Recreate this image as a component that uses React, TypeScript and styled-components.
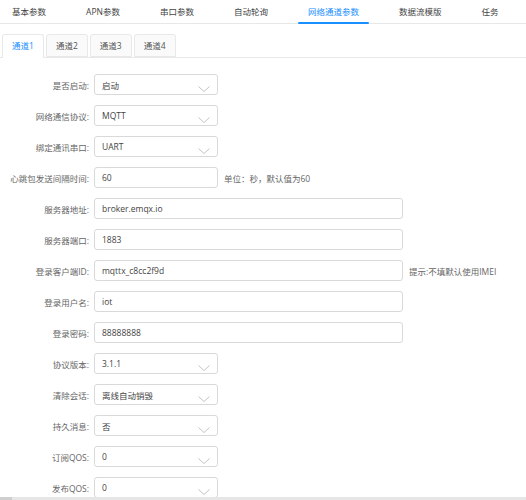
import React from 'react';
import styled, { createGlobalStyle } from 'styled-components';

const GlobalStyle = createGlobalStyle`
  html, body {
    margin: 0;
    padding: 0;
    background: #fff;
    overflow: hidden;
  }
  body {
    font-family: "Open Sans", "Noto Sans CJK SC", sans-serif;
    font-size: 8.5px;
    color: #444;
  }
`

const topTabs = ['基本参数', 'APN参数', '串口参数', '自动轮询', '网络通道参数', '数据流模版', '任务']
const subTabs = ['通道1', '通道2', '通道3', '通道4']

type Row = {
  label: string
  value: string
  kind: 'select' | 'short' | 'wide'
  note?: string
}

const rows: Row[] = [
  { label: '是否启动:', value: '启动', kind: 'select' },
  { label: '网络通信协议:', value: 'MQTT', kind: 'select' },
  { label: '绑定通讯串口:', value: 'UART', kind: 'select' },
  { label: '心跳包发送间隔时间:', value: '60', kind: 'short', note: '单位：秒，默认值为60' },
  { label: '服务器地址:', value: 'broker.emqx.io', kind: 'wide' },
  { label: '服务器端口:', value: '1883', kind: 'wide' },
  { label: '登录客户端ID:', value: 'mqttx_c8cc2f9d', kind: 'wide', note: '提示:不填默认使用IMEI' },
  { label: '登录用户名:', value: 'iot', kind: 'wide' },
  { label: '登录密码:', value: '88888888', kind: 'wide' },
  { label: '协议版本:', value: '3.1.1', kind: 'select' },
  { label: '清除会话:', value: '离线自动销毁', kind: 'select' },
  { label: '持久消息:', value: '否', kind: 'select' },
  { label: '订阅QOS:', value: '0', kind: 'select' },
  { label: '发布QOS:', value: '0', kind: 'select' },
]

export default function App() {
  return (
    <>
      <GlobalStyle />
      <Page>
        <TopBar>
          {topTabs.map((t) => (
            <TopTab key={t} $active={t === '网络通道参数'}>{t}</TopTab>
          ))}
        </TopBar>
        <CardBar>
          {subTabs.map((t, i) => (
            <CardTab key={t} $active={i === 0}>{t}</CardTab>
          ))}
        </CardBar>
        <Form>
          {rows.map((r) => (
            <FormRow key={r.label}>
              <Label>{r.label}</Label>
              <Field $wide={r.kind === 'wide'}>
                <span>{r.value}</span>
                {r.kind === 'select' && (
                  <Chevron width="12" height="6" viewBox="0 0 12 6">
                    <path d="M0.5 0.5 L6 5.5 L11.5 0.5" fill="none" stroke="#b5b5b5" strokeWidth="0.8" />
                  </Chevron>
                )}
              </Field>
              {r.note && <Note>{r.note}</Note>}
            </FormRow>
          ))}
        </Form>
      </Page>
      <ScrollTrack>
        <ScrollThumb />
      </ScrollTrack>
    </>
  )
}

const Page = styled.div`
  width: 526px;
`
const TopBar = styled.div`
  display: flex;
  gap: 20px;
  padding-left: 2px;
  height: 24px;
  border-bottom: 1px solid #e8e8e8;
  box-sizing: border-box;
`
const TopTab = styled.div<{ $active?: boolean }>`
  position: relative;
  padding: 0 10px;
  line-height: 23px;
  white-space: nowrap;
  color: ${(p) => (p.$active ? '#1890ff' : '#444')};
  &::after {
    content: '';
    display: ${(p) => (p.$active ? 'block' : 'none')};
    position: absolute;
    left: 0;
    right: 0;
    bottom: -1px;
    height: 2px;
    border-radius: 1px;
    background: #1890ff;
  }
`
const CardBar = styled.div`
  display: flex;
  gap: 2px;
  margin-top: 10px;
  padding-left: 2px;
  border-bottom: 1px solid #e8e8e8;
  height: 24px;
  box-sizing: border-box;
`
const CardTab = styled.div<{ $active?: boolean }>`
  padding: 0 9px;
  line-height: 22px;
  height: ${(p) => (p.$active ? '24px' : '23px')};
  box-sizing: border-box;
  border: 1px solid #e8e8e8;
  border-bottom: ${(p) => (p.$active ? 'none' : '1px solid #e8e8e8')};
  border-radius: 3px 3px 0 0;
  background: ${(p) => (p.$active ? '#fff' : '#fafafa')};
  color: ${(p) => (p.$active ? '#1890ff' : '#555')};
`
const Form = styled.div`
  padding-top: 16px;
`
const FormRow = styled.div`
  display: flex;
  align-items: center;
  height: 21px;
  margin-bottom: 10px;
`
const Label = styled.div`
  width: 89px;
  padding-right: 5px;
  text-align: right;
  white-space: nowrap;
  color: #666;
  flex-shrink: 0;
`
const Field = styled.div<{ $wide?: boolean }>`
  position: relative;
  width: ${(p) => (p.$wide ? '309px' : '124px')};
  height: 21px;
  box-sizing: border-box;
  border: 1px solid #d9d9d9;
  border-radius: 3px;
  padding: 0 7px;
  display: flex;
  align-items: center;
  color: #444;
  flex-shrink: 0;
`
const Chevron = styled.svg`
  position: absolute;
  right: 7px;
  top: 11px;
`
const Note = styled.div`
  margin-left: 6px;
  color: #666;
  white-space: nowrap;
`
const ScrollTrack = styled.div`
  position: fixed;
  left: 0;
  right: 0;
  bottom: 0;
  height: 3px;
  background: #e6e6e6;
`
const ScrollThumb = styled.div`
  width: 12px;
  height: 3px;
  background: #cfcfcf;
`
